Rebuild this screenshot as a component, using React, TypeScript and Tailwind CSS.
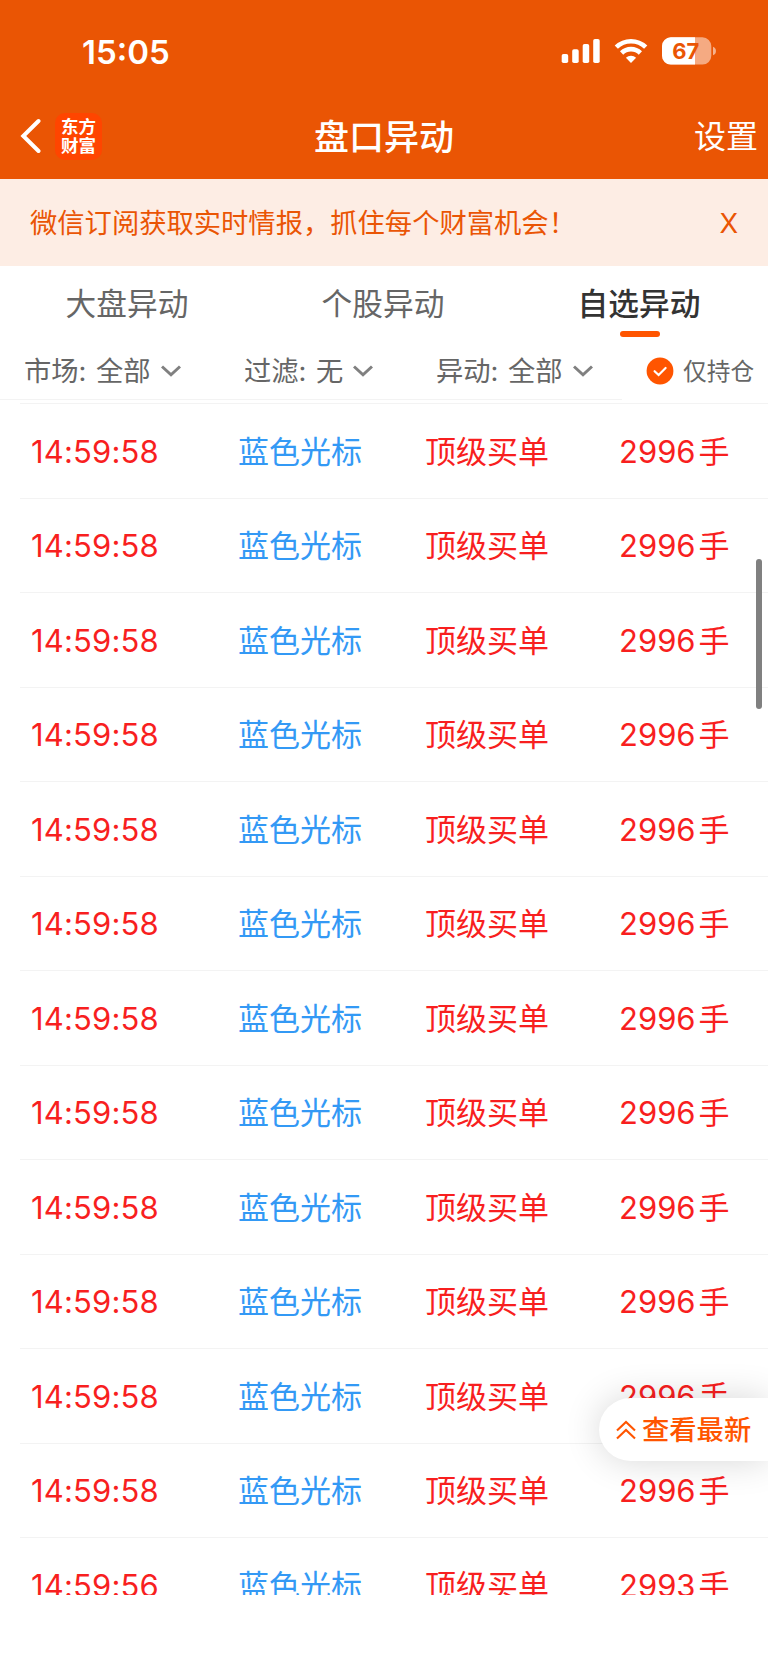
import { useState } from 'react';
import clsx from 'clsx';

interface Melding {
  time: string;
  name: string;
  type: string;
  amount: number;
}

const TABS = ['大盘异动', '个股异动', '自选异动'];

const ROWS: Melding[] = [
  ...Array.from({ length: 12 }, () => ({ time: '14:59:58', name: '蓝色光标', type: '顶级买单', amount: 2996 })),
  { time: '14:59:56', name: '蓝色光标', type: '顶级买单', amount: 2993 },
];

function StatusIcons() {
  return (
    <svg className="h-[30px] w-[156px]" viewBox="561 36 156 30">
      <g fill="#fff">
        <rect x="561.7" y="54" width="6.5" height="9" rx="1.8" />
        <rect x="572.2" y="49.3" width="6.5" height="13.7" rx="1.8" />
        <rect x="582.7" y="44" width="6.5" height="19" rx="1.8" />
        <rect x="593.2" y="39" width="6.5" height="24" rx="1.8" />
        <path d="M631 63 L625.9 57.7 A7.4 7.4 0 0 1 636.1 57.7 Z" />
      </g>
      <g fill="none" stroke="#fff" strokeWidth="4.6">
        <path d="M616.3 47.2 A21.2 21.2 0 0 1 645.7 47.2" />
        <path d="M621.6 53 A13.4 13.4 0 0 1 640.4 53" />
      </g>
      <rect x="662" y="37.3" width="49.3" height="27.3" rx="8.8" fill="#fff" fillOpacity="0.5" />
      <path d="M695 37.3 H670.8 A8.8 8.8 0 0 0 662 46.1 V55.8 A8.8 8.8 0 0 0 670.8 64.6 H695 Z" fill="#fff" />
      <path d="M713 46.7 A4.6 4.6 0 0 1 713 55.3 Z" fill="#fff" fillOpacity="0.55" />
      <text x="685.8" y="59" textAnchor="middle" fontSize="22" fontWeight="700" fill="#ea5504" fontFamily="Inter">
        67
      </text>
    </svg>
  );
}

function Arrow() {
  return (
    <svg className="h-3 w-5" viewBox="0 0 20 12" fill="none" stroke="#808080" strokeWidth="3">
      <path d="M1 1.5 L10 9.8 L19 1.5" />
    </svg>
  );
}

function Filter({ label, value, className }: { label: string; value: string; className: string }) {
  return (
    <button className={clsx('flex items-center', className)}>
      <span className="w-[72px] text-left">{label}:</span>
      <span className="mr-[10px]">{value}</span>
      <Arrow />
    </button>
  );
}

export default function App() {
  const [tab, setTab] = useState(2);
  const [showBanner, setShowBanner] = useState(true);

  return (
    <div className="relative h-[1663px] w-[768px] overflow-hidden bg-white font-['Inter','Noto_Sans_CJK_SC',sans-serif] leading-none whitespace-nowrap">
      <header className="h-[179px] bg-[#ea5504] text-white">
        <div className="flex h-[102px] items-center justify-between pr-[51px] pl-[82px]">
          <span className="pt-[2px] text-[33px] font-semibold">15:05</span>
          <StatusIcons />
        </div>
        <div className="grid h-[68px] grid-cols-[1fr_auto_1fr] items-center">
          <div className="flex items-center gap-[14px] pl-5">
            <svg className="h-9 w-[21px]" viewBox="0 0 21 36" fill="none" stroke="#fff" strokeWidth="4" strokeLinecap="round">
              <path d="M18.5 3 L3.3 18 L18.5 33" />
            </svg>
            <div className="flex h-[47px] w-[47px] flex-col items-center justify-center gap-[2px] rounded-[10px] bg-[#ff4500] text-[17.5px] font-bold">
              <span>东方</span>
              <span>财富</span>
            </div>
          </div>
          <h1 className="pt-[2px] text-[35px] font-medium">盘口异动</h1>
          <button className="justify-self-end pt-[2px] pr-[10px] text-[32px]">设置</button>
        </div>
      </header>

      {showBanner && (
        <div className="flex h-[87px] items-center justify-between bg-[#fdede4] pt-[2px] pr-[30px] pl-[30px] text-[27.3px] text-[#ea5504]">
          <span>微信订阅获取实时情报，抓住每个财富机会！</span>
          <button onClick={() => setShowBanner(false)}>X</button>
        </div>
      )}

      <nav className="grid h-[76px] grid-cols-3 text-[30.7px] text-[#666]">
        {TABS.map((t, i) => (
          <button
            key={t}
            onClick={() => setTab(i)}
            className={clsx('flex flex-col items-center pt-[23px]', tab === i && 'font-medium text-[#333]')}
          >
            <span className="pr-[2px]">{t}</span>
            {tab === i && <span className="mt-[11px] h-[6px] w-10 rounded-full bg-[#ff5500]" />}
          </button>
        ))}
      </nav>

      {/* Filters */}
      <div className="mb-[3px] flex h-[58px] text-[27.3px] text-[#666]">
        <div className="flex w-[622px] items-center border-b border-[#f3f3f3] pt-[2px] pl-6">
          <Filter label="市场" value="全部" className="w-[220px]" />
          <Filter label="过滤" value="无" className="w-[192px]" />
          <Filter label="异动" value="全部" className="" />
        </div>
        <label className="flex items-center gap-[9px] pl-6">
          <svg className="h-7 w-7" viewBox="0 0 28 28">
            <circle cx="14" cy="14" r="13.4" fill="#ff5500" />
            <path d="M8.6 14.2 L12.6 18 L19.6 11" fill="none" stroke="#fff" strokeWidth="2.2" strokeLinecap="round" />
          </svg>
          <span className="pt-[2px] text-[23.7px]">仅持仓</span>
        </label>
      </div>

      {/* List */}
      <div className="h-[1192px] overflow-hidden pl-5">
        {ROWS.map((row, i) => (
          <div
            key={i}
            className="grid h-[94.5px] grid-cols-[207px_187px_194px_auto] items-center border-t border-[#f3f3f3] pt-[1px] pl-[11px] text-[31px] text-[#f81f1f]"
          >
            <span className="tracking-[0.15px]">{row.time}</span>
            <span className="text-[#3399f5]">{row.name}</span>
            <span>{row.type}</span>
            <span className="flex items-center gap-[3px]">
              <span>{row.amount}</span>
              <span>手</span>
            </span>
          </div>
        ))}
      </div>

      <div className="absolute top-[559px] right-[6px] h-[150px] w-[6px] rounded-full bg-[#808080]" />

      <button className="absolute top-[1398px] right-0 flex h-[63px] w-[169px] items-center gap-[6px] rounded-l-full bg-white pl-[17px] text-[27.3px] font-medium text-[#ff5500] shadow-[0_0_36px_rgba(0,0,0,0.16)]">
        <svg className="h-5 w-5" viewBox="0 0 20 20" fill="none" stroke="#ff5500" strokeWidth="2.1">
          <path d="M1 10.5 L10 2 L19 10.5 M1 18.5 L10 10 L19 18.5" />
        </svg>
        <span className="pt-[2px]">查看最新</span>
      </button>
    </div>
  );
}
